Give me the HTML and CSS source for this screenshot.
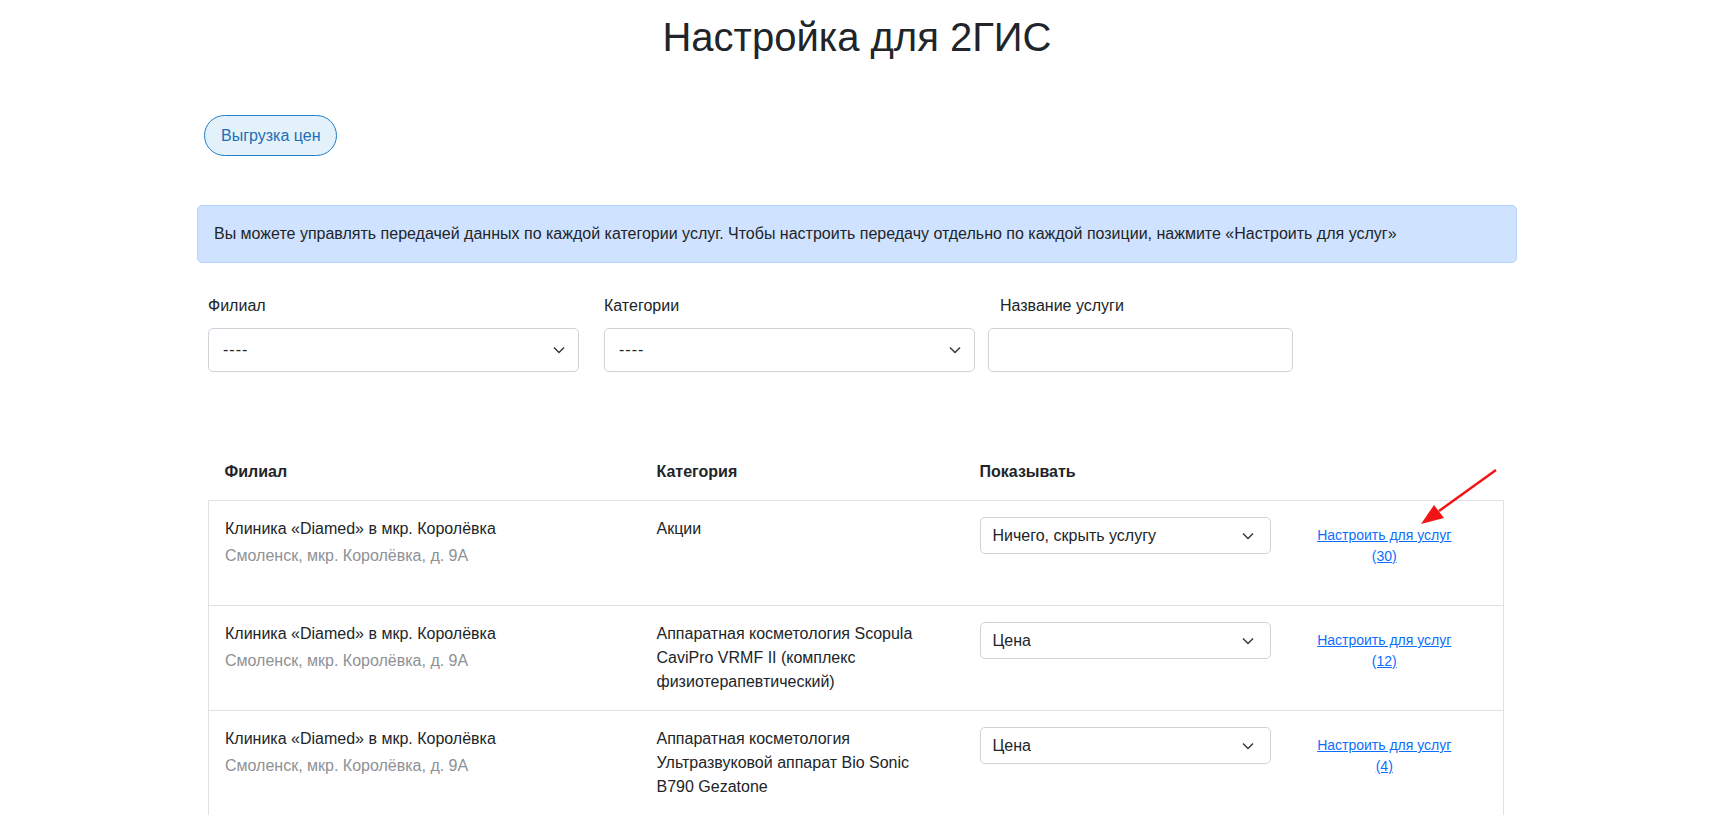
FILE: index.html
```html
<!DOCTYPE html>
<html lang="ru">
<head>
    <meta charset="UTF-8">
    <title>Настройка для 2ГИС</title>
    <link rel="stylesheet" href="styles.css">
</head>
<body>
    <div class="page">
        <h1 class="page-title">Настройка для 2ГИС</h1>

        <div class="toolbar">
            <button class="btn-pill">Выгрузка цен</button>
        </div>

        <div class="alert">
            Вы можете управлять передачей данных по каждой категории услуг. Чтобы настроить передачу отдельно по каждой позиции, нажмите «Настроить для услуг»
        </div>

        <div class="filters">
            <div class="filter filter-branch">
                <label>Филиал</label>
                <div class="fake-select">
                    <span class="placeholder">----</span>
                    <svg class="chevron" width="12" height="8" viewBox="0 0 12 8"><path d="M1 1.5 L6 6.5 L11 1.5"/></svg>
                </div>
            </div>
            <div class="filter filter-category">
                <label>Категории</label>
                <div class="fake-select">
                    <span class="placeholder">----</span>
                    <svg class="chevron" width="12" height="8" viewBox="0 0 12 8"><path d="M1 1.5 L6 6.5 L11 1.5"/></svg>
                </div>
            </div>
            <div class="filter filter-name">
                <label>Название услуги</label>
                <input type="text" class="text-input">
            </div>
        </div>

        <table class="services">
            <colgroup>
                <col class="col-branch">
                <col class="col-category">
                <col class="col-show">
                <col class="col-link">
            </colgroup>
            <thead>
                <tr>
                    <th>Филиал</th>
                    <th>Категория</th>
                    <th>Показывать</th>
                    <th></th>
                </tr>
            </thead>
            <tbody>
                <tr>
                    <td>
                        <div>Клиника «Diamed» в мкр. Королёвка</div>
                        <div class="address">Смоленск, мкр. Королёвка, д. 9А</div>
                    </td>
                    <td>Акции</td>
                    <td>
                        <div class="row-select">
                            <span>Ничего, скрыть услугу</span>
                            <svg class="chevron" width="12" height="8" viewBox="0 0 12 8"><path d="M1 1.5 L6 6.5 L11 1.5"/></svg>
                        </div>
                    </td>
                    <td class="link-cell"><a href="#">Настроить для услуг (30)</a></td>
                </tr>
                <tr>
                    <td>
                        <div>Клиника «Diamed» в мкр. Королёвка</div>
                        <div class="address">Смоленск, мкр. Королёвка, д. 9А</div>
                    </td>
                    <td>Аппаратная косметология Scopula CaviPro VRMF II (комплекс физиотерапевтический)</td>
                    <td>
                        <div class="row-select">
                            <span>Цена</span>
                            <svg class="chevron" width="12" height="8" viewBox="0 0 12 8"><path d="M1 1.5 L6 6.5 L11 1.5"/></svg>
                        </div>
                    </td>
                    <td class="link-cell"><a href="#">Настроить для услуг (12)</a></td>
                </tr>
                <tr>
                    <td>
                        <div>Клиника «Diamed» в мкр. Королёвка</div>
                        <div class="address">Смоленск, мкр. Королёвка, д. 9А</div>
                    </td>
                    <td>Аппаратная косметология Ультразвуковой аппарат Bio Sonic B790 Gezatone</td>
                    <td>
                        <div class="row-select">
                            <span>Цена</span>
                            <svg class="chevron" width="12" height="8" viewBox="0 0 12 8"><path d="M1 1.5 L6 6.5 L11 1.5"/></svg>
                        </div>
                    </td>
                    <td class="link-cell"><a href="#">Настроить для услуг (4)</a></td>
                </tr>
            </tbody>
        </table>

        <!-- стрелка-подсказка -->
        <svg class="pointer" width="95" height="70" viewBox="0 0 95 70">
            <line x1="84" y1="8" x2="27" y2="49" stroke="#f21414" stroke-width="2.5"/>
            <polygon points="9,62 22,43 32,56" fill="#f21414"/>
        </svg>
    </div>
</body>
</html>
```

FILE: styles.css
```css
body {
    margin: 0;
    font-family: "Liberation Sans", Arial, sans-serif;
    font-size: 16px;
    line-height: 24px;
    color: #212529;
    background-color: #fff;
}

.page {
    position: relative;
    max-width: 1320px;
    margin: 0 auto;
    padding-top: 13px;
}

.page-title {
    margin: 0;
    font-size: 40px;
    line-height: 48px;
    font-weight: 400;
    text-align: center;
}

.toolbar {
    margin-top: 54px;
    padding-left: 7px;
}

.btn-pill {
    font: inherit;
    line-height: 23px;
    padding: 8px 16px;
    border: 1px solid #1f7fc8;
    border-radius: 21px;
    background-color: #e3f1fb;
    color: #1d6fb8;
    cursor: pointer;
}

.alert {
    margin-top: 49px;
    padding: 16px;
    border: 1px solid #b6d4fe;
    border-radius: 5px;
    background-color: #cfe2ff;
}

.filters {
    margin-top: 31px;
    padding-left: 11px;
    display: flex;
    align-items: flex-end;
}

.filter label {
    display: block;
    margin-bottom: 10px;
}

.filter-branch {
    width: 371px;
    margin-right: 25px;
}

.filter-category {
    width: 371px;
    margin-right: 13px;
}

.filter-name {
    width: 305px;
}

.filter-name label {
    padding-left: 12px;
}

.fake-select, .row-select {
    display: flex;
    align-items: center;
    justify-content: space-between;
    box-sizing: border-box;
    border: 1px solid #ced4da;
    border-radius: 5px;
    background-color: #fff;
}

.fake-select {
    height: 44px;
    padding: 0 13px 0 14px;
}

.placeholder {
    letter-spacing: 1px;
}

.row-select {
    height: 37px;
    padding: 0 16px 0 12px;
}

.chevron path {
    fill: none;
    stroke: #343a40;
    stroke-width: 1.5;
}

.text-input {
    display: block;
    width: 100%;
    height: 44px;
    box-sizing: border-box;
    border: 1px solid #ced4da;
    border-radius: 5px;
}

.services {
    margin: 72px 0 0 11px;
    width: 1295px;
    border-collapse: collapse;
    table-layout: fixed;
}

.col-branch { width: 432px; }
.col-category { width: 323px; }
.col-show { width: 323px; }
.col-link { width: 217px; }

.services th {
    text-align: left;
    padding: 16px;
    font-weight: 700;
}

.services tbody tr {
    height: 105px;
}

.services td {
    vertical-align: top;
    padding: 16px;
    border-top: 1px solid #dee2e6;
}

.services td:first-child {
    border-left: 1px solid #dee2e6;
}

.services td:last-child {
    border-right: 1px solid #dee2e6;
}

.address {
    margin-top: 3px;
    color: #8e9196;
}

.link-cell {
    text-align: center;
    font-size: 14px;
    line-height: 21px;
}

.services td.link-cell {
    padding: 24px 47px 16px 26px;
}

.link-cell a {
    color: #0d6efd;
}

.pointer {
    position: absolute;
    left: 1215px;
    top: 462px;
}
```
